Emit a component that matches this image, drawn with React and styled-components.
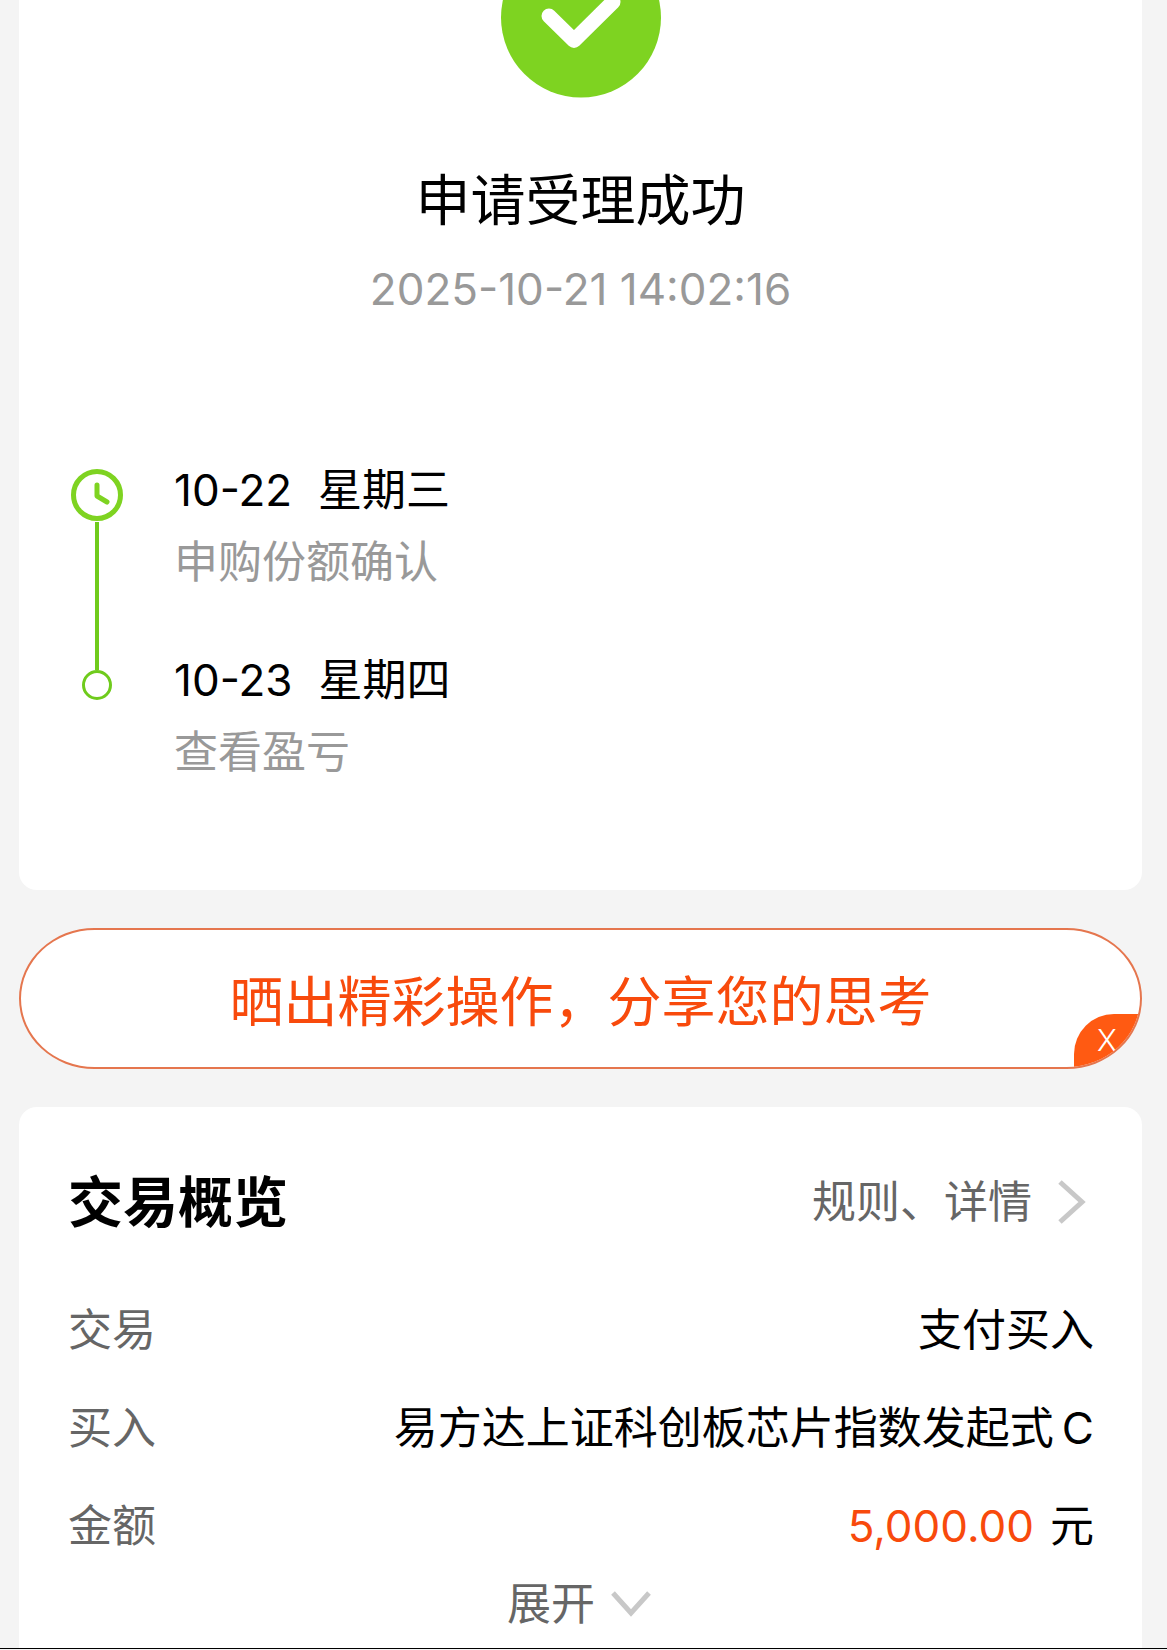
import React from "react";
import styled, { createGlobalStyle } from "styled-components";

const color = {
  page: "#f4f4f4",
  card: "#ffffff",
  ink: "#000000",
  label: "#666666",
  muted: "#999999",
  chevron: "#c8c8c8",
  success: "#7ed321",
  rail: "#6fcb1c",
  accent: "#f84a0c",
  corner: "#ff5a12",
  outline: "#e5764e",
};

const GlobalStyle = createGlobalStyle`
  * { box-sizing: border-box; }
  body {
    margin: 0;
    background: ${color.page};
    color: ${color.ink};
    font-family: Inter, "Noto Sans CJK SC", sans-serif;
    font-size: 44px;
    line-height: 70px;
  }
  h1, h2, p, ol, dl, dd { margin: 0; padding: 0; }
  button { font: inherit; border: 0; background: none; padding: 0; cursor: pointer; }
`;

const Page = styled.main`
  display: flex;
  flex-direction: column;
  gap: 38px;
  padding: 0 25px 0 19px;
  border-bottom: 1px solid ${color.ink};
`;

const Card = styled.section`
  background: ${color.card};
  border-radius: ${(p) => (p.$edge === "top" ? "0 0 18px 18px" : "18px 18px 0 0")};
  padding: ${(p) => (p.$edge === "top" ? "0 51px 103px" : "46px 48px 15px 49px")};
`;

const Result = styled.header`
  display: flex;
  flex-direction: column;
  align-items: center;
  text-align: center;
`;

const SuccessMark = styled.svg`
  display: block;
  width: 160px;
  height: 98px;
`;

const ResultTitle = styled.h1`
  margin-top: 61px;
  font-size: 55px;
  font-weight: 400;
  line-height: 82px;
`;

const ResultTime = styled.time`
  margin-top: 13px;
  color: ${color.muted};
`;

const Timeline = styled.ol`
  margin-top: 131px;
  list-style: none;
`;

const Step = styled.li`
  display: flex;
  gap: 50px;
`;

const Rail = styled.div`
  display: flex;
  flex-direction: column;
  align-items: center;
  width: 54px;
  padding-top: ${(p) => (p.$first ? "13px" : "0")};
`;

const Clock = styled.svg`
  display: block;
  width: 54px;
  height: 54px;
`;

const Connector = styled.span`
  width: 4px;
  background: ${color.rail};
  ${(p) => (p.$grow ? "flex: 1;" : "height: 25px;")}
`;

const Dot = styled.span`
  width: 30px;
  height: 30px;
  border: 3px solid ${color.rail};
  border-radius: 50%;
`;

const StepBody = styled.div`
  padding-bottom: ${(p) => (p.$last ? "0" : "48px")};
`;

const StepDate = styled.p`
  display: flex;
  gap: 26px;
`;

const StepNote = styled.p`
  margin-top: 2px;
  color: ${color.muted};
`;

const Banner = styled.div`
  position: relative;
  overflow: hidden;
  display: flex;
  height: 141px;
  background: ${color.card};
  border: 2px solid ${color.outline};
  border-radius: 76px / 71px;
`;

const ShareButton = styled.button`
  flex: 1;
  padding-top: 8px;
  color: ${color.accent};
  font-size: 54px;
`;

const CloseButton = styled.button`
  position: absolute;
  right: 0;
  bottom: 0;
  width: 66px;
  height: 53px;
  display: flex;
  justify-content: center;
  background: ${color.corner};
  border-radius: 40px 0 0 0;
  color: #ffffff;
  font-size: 30px;
  font-weight: 300;
  line-height: 53px;
`;

const OverviewHead = styled.div`
  display: flex;
  justify-content: space-between;
  align-items: center;
  height: 98px;
  margin-bottom: 30px;
`;

const OverviewTitle = styled.h2`
  font-size: 55px;
  font-weight: 700;
`;

const DetailLink = styled.a`
  display: flex;
  align-items: center;
  gap: 26px;
  padding-right: 8px;
  color: ${color.label};
  text-decoration: none;
`;

const Chevron = styled.svg`
  display: block;
  fill: none;
  stroke: ${color.chevron};
  stroke-width: 5;
`;

const Row = styled.div`
  display: flex;
  justify-content: space-between;
  line-height: 98px;
`;

const RowLabel = styled.dt`
  color: ${color.label};
`;

const RowValue = styled.dd`
  display: flex;
  gap: ${(p) => p.$gap || "0"};
  text-align: right;
`;

const Amount = styled.span`
  color: ${color.accent};
`;

const ExpandButton = styled.button`
  display: flex;
  align-items: center;
  gap: 16px;
  margin: 0 auto;
  padding-right: 4px;
  height: 58px;
  color: ${color.label};
`;

export default function App() {
  return (
    <>
      <GlobalStyle />
      <Page>
        <Card $edge="top">
          <Result>
            <SuccessMark viewBox="0 0 160 98" aria-hidden="true">
              <circle cx="80" cy="17.5" r="80" fill={color.success} />
              <path
                d="M48 16 L73 40.5 L112 2"
                fill="none"
                stroke="#fff"
                strokeWidth="15"
                strokeLinecap="round"
                strokeLinejoin="round"
              />
            </SuccessMark>
            <ResultTitle>申请受理成功</ResultTitle>
            <ResultTime dateTime="2025-10-21T14:02:16">2025-10-21 14:02:16</ResultTime>
          </Result>
          <Timeline>
            <Step>
              <Rail $first>
                <Clock viewBox="0 0 54 54" fill="none" stroke={color.success} aria-hidden="true">
                  <circle cx="27" cy="27" r="23.5" strokeWidth="5" />
                  <path d="M27 17 V28 L37 34" strokeWidth="5" strokeLinecap="round" strokeLinejoin="round" />
                </Clock>
                <Connector $grow />
              </Rail>
              <StepBody>
                <StepDate>
                  <span>10-22</span>
                  <span>星期三</span>
                </StepDate>
                <StepNote>申购份额确认</StepNote>
              </StepBody>
            </Step>
            <Step>
              <Rail>
                <Connector />
                <Dot />
              </Rail>
              <StepBody $last>
                <StepDate>
                  <span>10-23</span>
                  <span>星期四</span>
                </StepDate>
                <StepNote>查看盈亏</StepNote>
              </StepBody>
            </Step>
          </Timeline>
        </Card>

        <Banner>
          <ShareButton type="button">晒出精彩操作，分享您的思考</ShareButton>
          <CloseButton type="button">X</CloseButton>
        </Banner>

        <Card $edge="bottom">
          <OverviewHead>
            <OverviewTitle>交易概览</OverviewTitle>
            <DetailLink href="#detail">
              规则、详情
              <Chevron width="28" height="44" viewBox="0 0 28 44" aria-hidden="true">
                <path d="M2 2 L24 22 L2 42" />
              </Chevron>
            </DetailLink>
          </OverviewHead>
          <dl>
            <Row>
              <RowLabel>交易</RowLabel>
              <RowValue>支付买入</RowValue>
            </Row>
            <Row>
              <RowLabel>买入</RowLabel>
              <RowValue $gap="8px">
                <span>易方达上证科创板芯片指数发起式</span>
                <span>C</span>
              </RowValue>
            </Row>
            <Row>
              <RowLabel>金额</RowLabel>
              <RowValue $gap="16px">
                <Amount>5,000.00</Amount>
                <span>元</span>
              </RowValue>
            </Row>
          </dl>
          <ExpandButton type="button">
            展开
            <Chevron width="40" height="26" viewBox="0 0 40 26" aria-hidden="true">
              <path d="M2 2 L20 22 L38 2" />
            </Chevron>
          </ExpandButton>
        </Card>
      </Page>
    </>
  );
}
